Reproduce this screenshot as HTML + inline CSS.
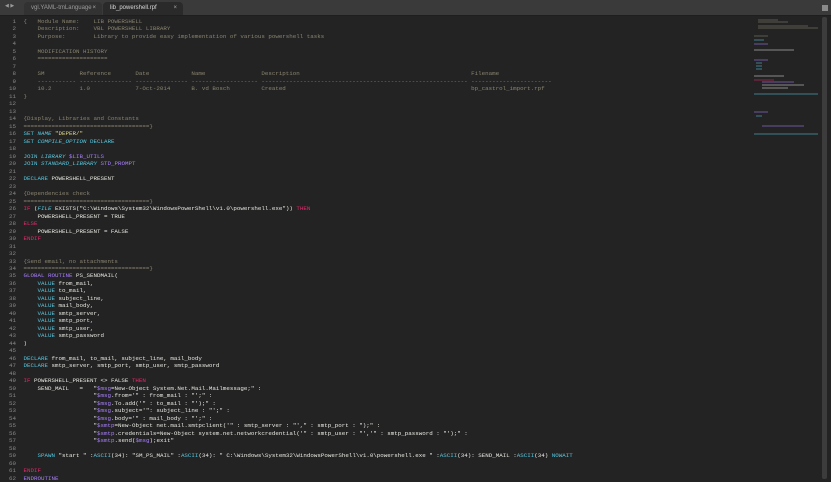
<!DOCTYPE html>
<html><head><meta charset="utf-8"><style>
html,body{margin:0;padding:0;width:831px;height:479px;overflow:hidden;background:#232323;}
#tabs{position:absolute;left:0;top:0;width:831px;height:15px;background:#3a3a3a;border-bottom:1px solid #1e1e1e;}
.tab{position:absolute;top:2px;height:13px;border-radius:4px 4px 0 0;font:6px "Liberation Sans",sans-serif;line-height:13px;padding-left:7px;box-sizing:border-box}
.t1{left:24px;width:78px;background:#323232;color:#9a9a9a}
.t2{left:103px;width:80px;background:#2a2a2a;color:#d8d8d8}
.x{position:absolute;right:6px;top:0;font-size:6px;color:#aaa}
#arr{position:absolute;left:5px;top:3px;font:5px "DejaVu Sans",sans-serif;color:#999}
#menu{position:absolute;left:822px;top:5px;width:6px;height:6px;background:#8a8a8a}
pre{margin:0;font-family:"Liberation Mono",monospace;font-size:5.83px;line-height:7.49px;color:#e8e8e2;}
#nums{position:absolute;left:0;top:18px;width:16px;text-align:right;color:#8a8a8a}
#code{position:absolute;left:23.5px;top:18px;}
.c{color:#8a8470}.k{color:#58c8e0}.i{color:#58c8e0;font-style:italic}.p{color:#a97fff}.r{color:#e8286e}.s{color:#e0d890}
#mini{position:absolute;left:748px;top:16px;width:80px;height:130px;opacity:.55}
#sb{position:absolute;left:822px;top:17px;width:5px;height:462px;background:#3c3c3c;border-radius:2px}
</style></head><body>
<div id="tabs"><div id="arr">◀ ▶</div>
<div class="tab t1">vgl.YAML-tmLanguage<span class="x">×</span></div>
<div class="tab t2">lib_powershell.rpf<span class="x">×</span></div>
<div id="menu"></div></div>
<pre id="nums">1
2
3
4
5
6
7
8
9
10
11
12
13
14
15
16
17
18
19
20
21
22
23
24
25
26
27
28
29
30
31
32
33
34
35
36
37
38
39
40
41
42
43
44
45
46
47
48
49
50
51
52
53
54
55
56
57
58
59
60
61
62</pre>
<pre id="code"><span class="c">{   Module Name:    LIB POWERSHELL
    Description:    VBL POWERSHELL LIBRARY
    Purpose:        Library to provide easy implementation of various powershell tasks

    MODIFICATION HISTORY
    ====================

    SM          Reference       Date            Name                Description                                                 Filename
    ----------- --------------- --------------- ------------------- ----------------------------------------------------------- -----------------------
    10.2        1.0             7-Oct-2014      B. vd Bosch         Created                                                     bp_castrol_import.rpf
}</span>


<span class="c">{Display, Libraries and Constants
====================================}</span>
<span class="k">SET</span> <span class="i">NAME</span> <span class="s">"DEPER/"</span>
<span class="k">SET</span> <span class="i">COMPILE_OPTION</span> <span class="k">DECLARE</span>

<span class="k">JOIN</span> <span class="i">LIBRARY</span> <span class="p">$LIB_UTILS</span>
<span class="k">JOIN</span> <span class="i">STANDARD_LIBRARY</span> <span class="p">STD_PROMPT</span>

<span class="k">DECLARE</span> POWERSHELL_PRESENT

<span class="c">{Dependencies check
====================================}</span>
<span class="r">IF</span> (<span class="i">FILE</span> EXISTS("C:\Windows\System32\WindowsPowerShell\v1.0\powershell.exe")) <span class="r">THEN</span>
    POWERSHELL_PRESENT = TRUE
<span class="r">ELSE</span>
    POWERSHELL_PRESENT = FALSE
<span class="r">ENDIF</span>


<span class="c">{Send email, no attachments
====================================}</span>
<span class="p">GLOBAL ROUTINE</span> PS_SENDMAIL(
    <span class="k">VALUE</span> from_mail,
    <span class="k">VALUE</span> to_mail,
    <span class="k">VALUE</span> subject_line,
    <span class="k">VALUE</span> mail_body,
    <span class="k">VALUE</span> smtp_server,
    <span class="k">VALUE</span> smtp_port,
    <span class="k">VALUE</span> smtp_user,
    <span class="k">VALUE</span> smtp_password
)

<span class="k">DECLARE</span> from_mail, to_mail, subject_line, mail_body
<span class="k">DECLARE</span> smtp_server, smtp_port, smtp_user, smtp_password

<span class="r">IF</span> POWERSHELL_PRESENT &lt;&gt; FALSE <span class="r">THEN</span>
    SEND_MAIL   =   "<span class="p">$msg</span>=New-Object System.Net.Mail.Mailmessage;" :
                    "<span class="p">$msg</span>.from='" : from_mail : "';" :
                    "<span class="p">$msg</span>.To.add('" : to_mail : "');" :
                    "<span class="p">$msg</span>.subject='": subject_line : "';" :
                    "<span class="p">$msg</span>.body='" : mail_body : "';" :
                    "<span class="p">$smtp</span>=New-Object net.mail.smtpclient('" : smtp_server : "'," : smtp_port : ");" :
                    "<span class="p">$smtp</span>.credentials=New-Object system.net.networkcredential('" : smtp_user : "','" : smtp_password : "');" :
                    "<span class="p">$smtp</span>.send(<span class="p">$msg</span>);exit"

    <span class="k">SPAWN</span> "start " :<span class="k">ASCII</span>(34): "SM_PS_MAIL" :<span class="k">ASCII</span>(34): " C:\Windows\System32\WindowsPowerShell\v1.0\powershell.exe " :<span class="k">ASCII</span>(34): SEND_MAIL :<span class="k">ASCII</span>(34) <span class="k">NOWAIT</span>

<span class="r">ENDIF</span>
<span class="p">ENDROUTINE</span></pre>
<svg id="mini" viewBox="0 0 80 130">
<g stroke-width="1">
<line x1="10" y1="4" x2="30" y2="4" stroke="#8a8470"/><line x1="10" y1="6" x2="40" y2="6" stroke="#8a8470"/><line x1="10" y1="10" x2="60" y2="10" stroke="#8a8470"/><line x1="10" y1="12" x2="70" y2="12" stroke="#8a8470"/>
<line x1="6" y1="20" x2="20" y2="20" stroke="#8a8470"/><line x1="6" y1="24" x2="16" y2="24" stroke="#58c8e0"/><line x1="6" y1="28" x2="20" y2="28" stroke="#a97fff"/><line x1="6" y1="34" x2="46" y2="34" stroke="#ddd"/>
<line x1="6" y1="44" x2="20" y2="44" stroke="#a97fff"/><line x1="8" y1="47" x2="14" y2="47" stroke="#58c8e0"/><line x1="8" y1="50" x2="14" y2="50" stroke="#58c8e0"/><line x1="8" y1="53" x2="14" y2="53" stroke="#58c8e0"/>
<line x1="6" y1="60" x2="36" y2="60" stroke="#ddd"/><line x1="6" y1="64" x2="26" y2="64" stroke="#e8286e"/><line x1="14" y1="66" x2="46" y2="66" stroke="#a97fff"/><line x1="14" y1="69" x2="56" y2="69" stroke="#ddd"/><line x1="14" y1="72" x2="40" y2="72" stroke="#ddd"/><line x1="6" y1="78" x2="70" y2="78" stroke="#58c8e0"/>
<line x1="6" y1="96" x2="20" y2="96" stroke="#a97fff"/><line x1="8" y1="100" x2="14" y2="100" stroke="#58c8e0"/><line x1="14" y1="110" x2="56" y2="110" stroke="#a97fff"/><line x1="6" y1="118" x2="70" y2="118" stroke="#58c8e0"/>
</g></svg>
<div id="sb"></div>
</body></html>
